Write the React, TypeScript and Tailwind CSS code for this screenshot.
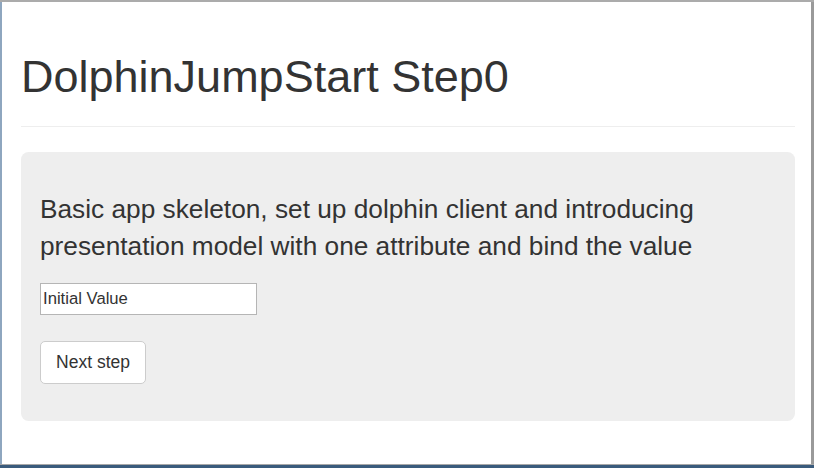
import React from "react";

export default function App() {
  return (
    <div
      className="w-[814px] h-[468px] overflow-hidden flex flex-col bg-white text-[#333]"
      style={{ fontFamily: '"Liberation Sans", Arial, Helvetica, sans-serif' }}
    >
      <div className="h-[2px] bg-[#ababab] shrink-0" />
      <div className="flex flex-1 min-h-0">
        <div className="w-[2px] bg-[#8ea6bf] shrink-0" />
        <div className="flex-1 pl-[19px] pr-[16px]">
          <div className="pt-[50px] pb-[12px] border-b border-[#eeeeee] mb-[25px]">
            <h1 className="text-[45px] leading-[49.5px] font-normal mb-[12.5px]">
              DolphinJumpStart Step0
            </h1>
          </div>
          <div className="bg-[#eeeeee] rounded-[7.5px] pt-[39px] pb-[37px] px-[19px]">
            <p className="text-[26.25px] leading-[37px] font-normal mb-[17.5px]">
              Basic app skeleton, set up dolphin client and introducing presentation model with one attribute and bind the value
            </p>
            <div className="mb-[26px]">
              <input
                type="text"
                defaultValue="Initial Value"
                className="w-[217px] h-[32px] border border-[#b5b5b5] bg-white px-[2px] text-[16.67px] text-[#333] outline-none block"
                style={{ fontFamily: '"Liberation Sans", Arial, sans-serif' }}
              />
            </div>
            <button className="block w-[106px] h-[43px] bg-white border border-[#cccccc] rounded-[5px] text-[17.5px] leading-[25px] text-[#333]">
              Next step
            </button>
          </div>
        </div>
        <div className="w-[3px] bg-[#9a9a9a] shrink-0" />
      </div>
      <div className="h-[1px] bg-[#a8a8a8] shrink-0" />
      <div className="h-[3px] bg-[#3a5b7c] shrink-0" />
    </div>
  );
}
